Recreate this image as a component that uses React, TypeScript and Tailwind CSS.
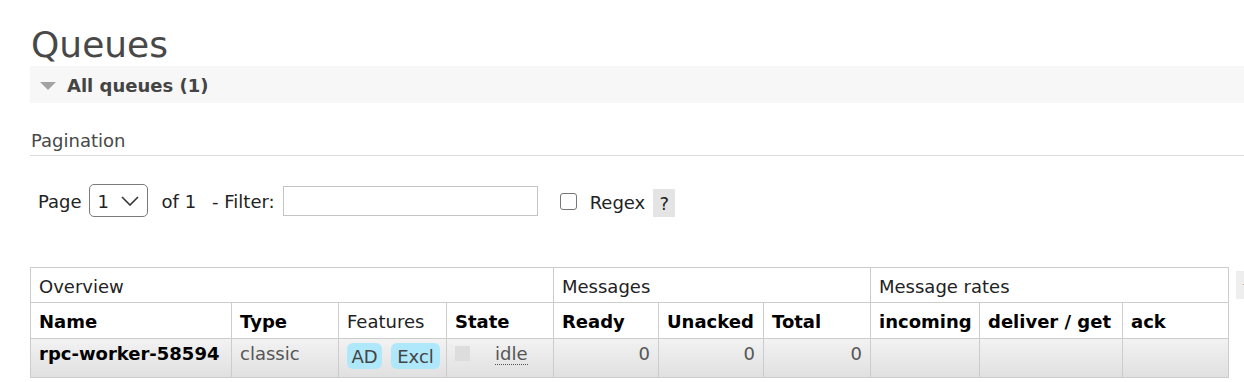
import React from "react";

const cols = [202, 107, 108, 107, 105, 105, 107, 109, 143, 106];

export default function App() {
  const th = "border-r border-b border-[#cccccc] px-[8px] h-[36px] align-top pt-[9px] leading-[20px] text-left";
  const td = "border-r border-b border-[#cccccc] px-[8px] h-[39px] align-top pt-[5px] leading-[20px]";
  return (
    <div className="w-[1244px] h-[382px] overflow-hidden bg-white font-['DejaVu_Sans',Verdana,sans-serif] text-[18px] text-[#222]">
      <div className="pl-[30px] pt-[27px]">
        <h1 className="text-[36px] leading-[36px] h-[36px] font-normal text-[#484848] pl-px">Queues</h1>
        <div className="mt-[3px] h-[37px] bg-[#f7f7f7] flex items-center">
          <svg width="16" height="10" viewBox="0 0 16 10" className="ml-[10px] mt-[2px]">
            <polygon points="0,1 16,1 8,9" fill="#a3a3a3" />
          </svg>
          <span className="ml-[11px] mt-[2px] font-bold text-[#444]">All queues (1)</span>
        </div>
        <div className="mt-[28px] h-[25px] pb-[4px] border-b border-[#dddddd] leading-[20px] pl-px text-[#484848]">
          Pagination
        </div>
        <div className="mt-[28px] h-[33px] flex items-center pl-[8px] text-[#222]">
          <span className="mt-[2px]">Page</span>
          <div className="ml-[7px] w-[59px] h-[33px] border border-[#7a7a7a] rounded-[5px] flex items-center pl-[8px]">
            <span className="mt-[1px]">1</span>
            <svg width="18" height="10" viewBox="0 0 18 10" className="ml-[12px]">
              <polyline points="1,1 9,9 17,1" fill="none" stroke="#333" strokeWidth="1.6" />
            </svg>
          </div>
          <span className="ml-[14px] mt-[2px]">of 1</span>
          <span className="ml-[16px] mt-[2px]">- Filter:</span>
          <div className="ml-[8px] w-[255px] h-[30px] border border-[#c4c4c4]" />
          <span className="ml-[22px] mt-[2px] w-[17px] h-[17px] border border-[#767676] rounded-[3px] bg-white" />
          <span className="ml-[13px] mt-[4px]">Regex</span>
          <span className="ml-[8px] w-[22px] h-[28px] bg-[#e4e4e4] flex items-center justify-center mt-[5px]">?</span>
        </div>
        <div className="mt-[50px] flex items-start">
          <table className="table-fixed border-separate border-spacing-0 w-[1199px] shrink-0">
            <colgroup>
              {cols.map((w, i) => (
                <col key={i} style={{ width: w }} />
              ))}
            </colgroup>
            <thead>
              <tr>
                <th colSpan={4} className={th + " border-l border-t font-normal"}>Overview</th>
                <th colSpan={3} className={th + " border-t font-normal"}>Messages</th>
                <th colSpan={3} className={th + " border-t font-normal"}>Message rates</th>
              </tr>
              <tr>
                <th className={th + " border-l font-bold text-black"}>Name</th>
                <th className={th + " font-bold text-black"}>Type</th>
                <th className={th + " font-normal"}>Features</th>
                <th className={th + " font-bold text-black"}>State</th>
                <th className={th + " font-bold text-black"}>Ready</th>
                <th className={th + " font-bold text-black"}>Unacked</th>
                <th className={th + " font-bold text-black"}>Total</th>
                <th className={th + " font-bold text-black"}>incoming</th>
                <th className={th + " font-bold text-black"}>deliver / get</th>
                <th className={th + " font-bold text-black"}>ack</th>
              </tr>
            </thead>
            <tbody>
              <tr className="bg-gradient-to-b from-[#f2f2f2] to-[#e0e0e0]">
                <td className={td + " border-l font-bold text-black"}>rpc-worker-58594</td>
                <td className={td + " text-[#555]"}>classic</td>
                <td className="border-r border-b border-[#cccccc] pl-[8px] h-[39px] align-top pt-[4px]">
                  <div className="flex gap-[9px]">
                    <span className="w-[35px] h-[26px] rounded-[6px] bg-[#aee8fa] text-[#444] flex items-center justify-center">AD</span>
                    <span className="w-[49px] h-[26px] rounded-[6px] bg-[#aee8fa] text-[#444] flex items-center justify-center">Excl</span>
                  </div>
                </td>
                <td className="border-r border-b border-[#cccccc] pl-[8px] h-[39px] align-top pt-[7px]">
                  <div className="flex items-start">
                    <span className="w-[15px] h-[15px] bg-[#dddddd]" />
                    <abbr className="ml-[25px] no-underline border-b border-dotted border-[#555] leading-[20px] text-[#555] -mt-[2px]">idle</abbr>
                  </div>
                </td>
                <td className={td + " text-right text-[#555]"}>0</td>
                <td className={td + " text-right text-[#555]"}>0</td>
                <td className={td + " text-right text-[#555]"}>0</td>
                <td className={td}></td>
                <td className={td}></td>
                <td className={td}></td>
              </tr>
            </tbody>
          </table>
          <div className="ml-[7px] mt-[4px] h-[28px] w-[30px] shrink-0 bg-[#eeeeee] flex items-center pl-[6px] text-[12px] text-[#888]">+/-</div>
        </div>
      </div>
    </div>
  );
}
